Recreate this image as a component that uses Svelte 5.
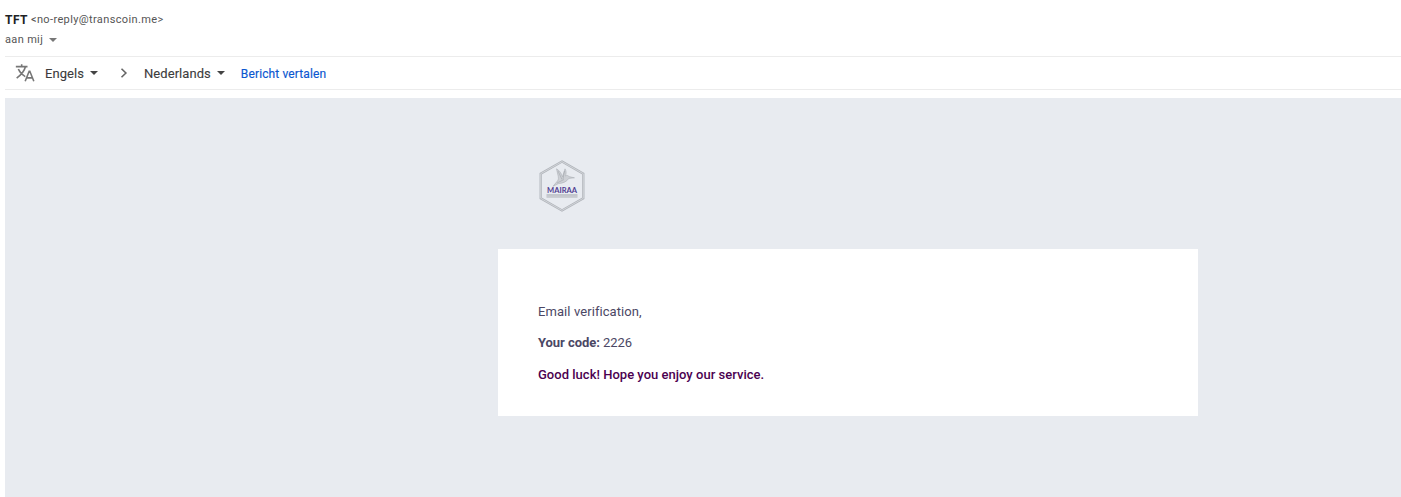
<script>
  const sender = { name: 'TFT', address: '<no-reply@transcoin.me>' };
  const code = '2226';
</script>

<main>
  <header>
    <div class="sender"><strong>{sender.name}</strong><span>{sender.address}</span></div>
    <div class="recipient"><span>aan mij</span><i class="caret"></i></div>
  </header>
  <nav>
    <svg class="translate" viewBox="0 0 24 24" width="20" height="20">
      <path fill="none" stroke="#777" stroke-width="1.9" d="M1 4.3h14M8 1.5v2.8M4 7.2c1.8 4.2 4.8 7.1 8.3 9.1M12.5 4.5C11.2 10 7.5 14 2 18.2M12.2 22l4.8-12.2h.8L22.6 22M14 17.8h7" />
    </svg>
    <span class="from">Engels</span><i class="caret dark"></i>
    <svg class="chevron" viewBox="0 0 8 12" width="8" height="12">
      <path d="M1.5 1.7 5.9 6 1.5 10.3" fill="none" stroke="#666" stroke-width="1.6" />
    </svg>
    <span class="to">Nederlands</span><i class="caret dark"></i>
    <a href="#translate">Bericht vertalen</a>
  </nav>
  <section>
    <svg class="logo" viewBox="0 0 48 54" width="48" height="54">
      <path d="M24 2.6 45.3 14.7V39.3L24 51.4 2.7 39.3V14.7Z" fill="none" stroke="#b0b4ba" stroke-width="2.3" />
      <path d="M24 2.6 45.3 14.7V39.3L24 51.4 2.7 39.3V14.7Z" fill="none" stroke="#d9dce0" stroke-width=".8" />
      <path d="M18.5 9.8C21.500 11.500 23.500 14.500 24.500 17.800L27 9.800C28.500 12 28.300 14.500 27.500 17 28.800 16 30 16.400 31 17.600L36.500 18.800 30.800 19.400C29 22.500 25 24.300 20.500 24.600L15 27.300 19 22.500C21 21 20.500 18 19.700 15Z" fill="#cdd0d5" stroke="#a2a6ac" stroke-width=".5" />
      <path d="M20 12l4 8.500M26.500 12l-1.500 8M19 24l7-3.500" fill="none" stroke="#989ca3" stroke-width=".5" />
      <text x="9" y="33.500" textLength="30" lengthAdjust="spacingAndGlyphs">MAIRAA</text>
      <path d="M8.500 35.600h31M8.500 38.200h31" stroke="#aeb2b8" stroke-width=".7" />
      <path d="M8.500 36.900h31" stroke="#c4c7cc" stroke-width="1.900" />
    </svg>
    <article>
      <p>Email verification,</p>
      <p class="code"><strong>Your code:</strong> {code}</p>
      <p class="thanks">Good luck! Hope you enjoy our service.</p>
    </article>
  </section>
</main>

<style>
  :global(body) { margin: 0; background: #fff; }
  main { box-sizing: border-box; height: 497px; padding-left: 5px; display: flex; flex-direction: column; overflow: hidden; font-family: Roboto, sans-serif; }
  header { height: 56px; flex-shrink: 0; box-sizing: border-box; padding-top: 10px; color: #555; font-size: 11px; letter-spacing: .34px; }
  .sender { height: 20px; line-height: 20px; display: flex; gap: 3px; }
  .sender strong { font-size: 12px; color: #202124; letter-spacing: .45px; }
  .sender span { letter-spacing: .37px; }
  .recipient { height: 20px; line-height: 20px; display: flex; align-items: center; gap: 6px; }
  .caret { width: 0; height: 0; border: 4px solid transparent; border-top-color: #777; border-bottom: 0; }
  .caret.dark { border-top-color: #444; margin-left: 6px; }
  nav { height: 34px; flex-shrink: 0; box-sizing: border-box; border-top: 1px solid #ececec; border-bottom: 1px solid #ececec; display: flex; align-items: center; padding-left: 10px; font-size: 13px; color: #3c3c3c; }
  .translate { margin-right: 10px; }
  .chevron { margin: 0 16px 0 22px; }
  nav span { letter-spacing: .06px; -webkit-text-stroke: .1px; }
  a { margin-left: 16px; padding-top: 1px; color: #0b57d0; text-decoration: none; font-size: 12px; letter-spacing: .12px; -webkit-text-stroke: .15px; }
  section { margin-top: 8px; flex: 1; background: #e8ebf0; }
  .logo { display: block; margin: 61px 0 36px 533px; }
  text { font-family: Lato, sans-serif; font-size: 6.7px; font-weight: 700; fill: #503d91; }
  article { width: 620px; height: 114px; padding: 53px 40px 0; margin-left: 493px; background: #fff; color: #4b4764; font-size: 13px; }
  p { margin: 0 0 11.5px; line-height: 20px; }
  p:first-child { letter-spacing: .08px; }
  .code { margin-top: -.5px; margin-bottom: 12px; letter-spacing: -.05px; }
  .thanks { color: #4b0050; font-weight: 500; letter-spacing: .02px; }
</style>
